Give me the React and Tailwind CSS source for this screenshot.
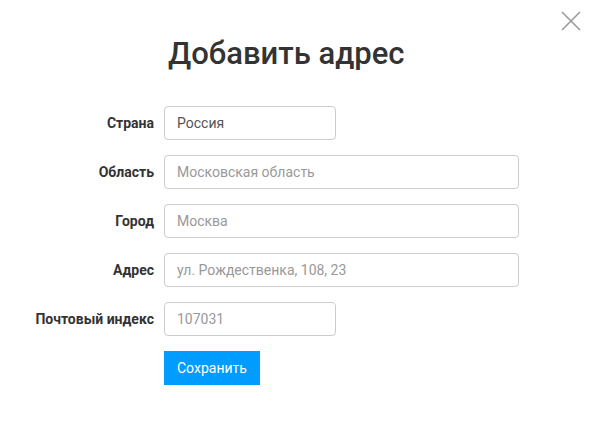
import React from 'react';

const rows = [
  { label: 'Страна', value: 'Россия', filled: true, wide: false },
  { label: 'Область', value: 'Московская область', wide: true },
  { label: 'Город', value: 'Москва', wide: true },
  { label: 'Адрес', value: 'ул. Рождественка, 108, 23', wide: true },
  { label: 'Почтовый индекс', value: '107031', wide: false },
];

const App = () => {
  return (
    <div className="relative w-[590px] h-[424px] bg-white" style={{ fontFamily: 'Roboto, "Liberation Sans", sans-serif' }}>
      {/* close */}
      <button className="absolute right-[9px] top-[11px] w-[20px] h-[20px]">
        <svg viewBox="0 0 20 20" className="w-[20px] h-[20px]">
          <path d="M1 1 L19 19 M19 1 L1 19" stroke="#9a9a9a" strokeWidth="1.6" fill="none" />
        </svg>
      </button>

      <h2 className="pt-[34px] pl-[168px] text-[31px] leading-[40px] text-[#333] font-medium">Добавить адрес</h2>

      <div className="mt-[32px] flex flex-col gap-[15px]">
        {rows.map((r) => (
          <div key={r.label} className="flex items-center">
            <label className="w-[154px] text-right text-[14px] font-bold text-[#333]">{r.label}</label>
            <div className="ml-[10px]">
              <div className={`${r.wide ? 'w-[355px]' : 'w-[172px]'} h-[34px] border border-[#ccc] rounded-[4px] px-[12px] flex items-center text-[14px] ${r.filled ? 'text-[#555]' : 'text-[#999]'}`}>
                {r.value}
              </div>
            </div>
          </div>
        ))}
        <div className="flex pl-[164px]">
          <button className="h-[34px] px-[13px] bg-[#009cff] text-white text-[14px]">Сохранить</button>
        </div>
      </div>
    </div>
  );
};

export default App;
